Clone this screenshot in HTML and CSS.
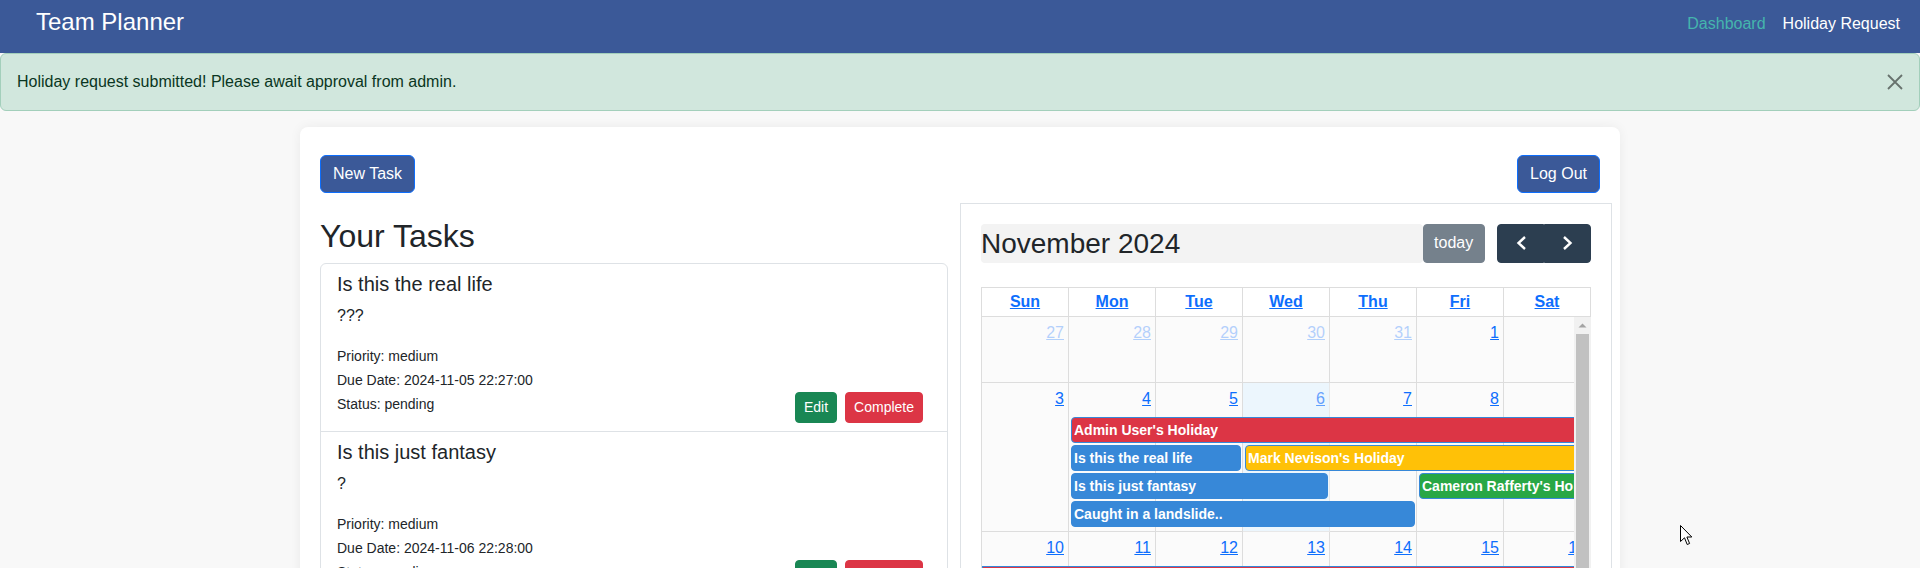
FILE: index.html
```html
<!DOCTYPE html>
<html lang="en">
<head>
<meta charset="utf-8">
<title>Team Planner</title>
<link rel="stylesheet" href="styles.css">
</head>
<body>
<nav class="navbar">
  <a class="brand" href="#">Team Planner</a>
  <div class="nav-links">
    <a class="nav-link active" href="#">Dashboard</a>
    <a class="nav-link" href="#">Holiday Request</a>
  </div>
</nav>

<div class="alert">
  <span>Holiday request submitted! Please await approval from admin.</span>
  <button class="btn-close" aria-label="Close">
    <svg width="16" height="16" viewBox="0 0 16 16"><path d="M1 1 L15 15 M15 1 L1 15" stroke="#000" stroke-width="1.8" fill="none"/></svg>
  </button>
</div>

<main class="container">
  <div class="card">
    <div class="top-actions">
      <button class="btn btn-primary">New Task</button>
      <button class="btn btn-primary">Log Out</button>
    </div>
    <div class="row">
      <section class="col-tasks">
        <h2 class="tasks-title">Your Tasks</h2>
        <ul class="list-group">
          <li class="task">
            <h5 class="task-title">Is this the real life</h5>
            <p class="task-desc">???</p>
            <div class="task-footer">
              <div class="task-meta">
                <div>Priority: medium</div>
                <div>Due Date: 2024-11-05 22:27:00</div>
                <div>Status: pending</div>
              </div>
              <div class="task-actions">
                <button class="btn-sm btn-success">Edit</button>
                <button class="btn-sm btn-danger">Complete</button>
              </div>
            </div>
          </li>
          <li class="task">
            <h5 class="task-title">Is this just fantasy</h5>
            <p class="task-desc">?</p>
            <div class="task-footer">
              <div class="task-meta">
                <div>Priority: medium</div>
                <div>Due Date: 2024-11-06 22:28:00</div>
                <div>Status: pending</div>
              </div>
              <div class="task-actions">
                <button class="btn-sm btn-success">Edit</button>
                <button class="btn-sm btn-danger">Complete</button>
              </div>
            </div>
          </li>
          <li class="task">
            <h5 class="task-title">Caught in a landslide..</h5>
            <p class="task-desc">No escape from reality</p>
            <div class="task-footer">
              <div class="task-meta">
                <div>Priority: medium</div>
                <div>Due Date: 2024-11-07 22:29:00</div>
                <div>Status: pending</div>
              </div>
              <div class="task-actions">
                <button class="btn-sm btn-success">Edit</button>
                <button class="btn-sm btn-danger">Complete</button>
              </div>
            </div>
          </li>
        </ul>
      </section>

      <section class="col-cal">
        <div class="toolbar">
          <h2 class="cal-title">November 2024</h2>
          <button class="fc-btn today">today</button>
          <div class="fc-group">
            <button class="fc-btn" aria-label="prev">
              <svg width="24" height="24" viewBox="0 0 24 24"><path d="M16 6 L9.5 12 L16 18" stroke="#fff" stroke-width="2.4" fill="none"/></svg>
            </button>
            <button class="fc-btn" aria-label="next">
              <svg width="24" height="24" viewBox="0 0 24 24"><path d="M8 6 L14.5 12 L8 18" stroke="#fff" stroke-width="2.4" fill="none"/></svg>
            </button>
          </div>
        </div>

        <div class="cal">
          <div class="cal-head">
            <div class="th"><a href="#">Sun</a></div>
            <div class="th"><a href="#">Mon</a></div>
            <div class="th"><a href="#">Tue</a></div>
            <div class="th"><a href="#">Wed</a></div>
            <div class="th"><a href="#">Thu</a></div>
            <div class="th"><a href="#">Fri</a></div>
            <div class="th"><a href="#">Sat</a></div>
          </div>
          <div class="cal-body">
            <div class="week week-short">
              <div class="day other"><a class="num" href="#">27</a></div>
              <div class="day other"><a class="num" href="#">28</a></div>
              <div class="day other"><a class="num" href="#">29</a></div>
              <div class="day other"><a class="num" href="#">30</a></div>
              <div class="day other"><a class="num" href="#">31</a></div>
              <div class="day"><a class="num" href="#">1</a></div>
              <div class="day"><a class="num" href="#">2</a></div>
            </div>
            <div class="week week-tall">
              <div class="day"><a class="num" href="#">3</a></div>
              <div class="day"><a class="num" href="#">4</a></div>
              <div class="day"><a class="num" href="#">5</a></div>
              <div class="day today"><a class="num" href="#">6</a></div>
              <div class="day"><a class="num" href="#">7</a></div>
              <div class="day"><a class="num" href="#">8</a></div>
              <div class="day"><a class="num" href="#">9</a></div>
              <div class="events">
                <div class="ev ev-red cont-r" style="grid-column: 2 / 8; grid-row: 1;">Admin User's Holiday</div>
                <div class="ev ev-blue" style="grid-column: 2 / 4; grid-row: 2;">Is this the real life</div>
                <div class="ev ev-yellow cont-r" style="grid-column: 4 / 8; grid-row: 2;">Mark Nevison's Holiday</div>
                <div class="ev ev-blue" style="grid-column: 2 / 5; grid-row: 3;">Is this just fantasy</div>
                <div class="ev ev-green cont-r" style="grid-column: 6 / 8; grid-row: 3;">Cameron Rafferty's Holiday</div>
                <div class="ev ev-blue" style="grid-column: 2 / 6; grid-row: 4;">Caught in a landslide..</div>
              </div>
            </div>
            <div class="week week-tall">
              <div class="day"><a class="num" href="#">10</a></div>
              <div class="day"><a class="num" href="#">11</a></div>
              <div class="day"><a class="num" href="#">12</a></div>
              <div class="day"><a class="num" href="#">13</a></div>
              <div class="day"><a class="num" href="#">14</a></div>
              <div class="day"><a class="num" href="#">15</a></div>
              <div class="day"><a class="num" href="#">16</a></div>
              <div class="events">
                <div class="ev ev-red cont-l cont-r" style="grid-column: 1 / 8; grid-row: 1;">Admin User's Holiday</div>
                <div class="ev ev-yellow cont-l" style="grid-column: 1 / 4; grid-row: 2;">Mark Nevison's Holiday</div>
                <div class="ev ev-green cont-l" style="grid-column: 1 / 2; grid-row: 3;">Cameron Rafferty's Holiday</div>
              </div>
            </div>
            <div class="week week-short">
              <div class="day"><a class="num" href="#">17</a></div>
              <div class="day"><a class="num" href="#">18</a></div>
              <div class="day"><a class="num" href="#">19</a></div>
              <div class="day"><a class="num" href="#">20</a></div>
              <div class="day"><a class="num" href="#">21</a></div>
              <div class="day"><a class="num" href="#">22</a></div>
              <div class="day"><a class="num" href="#">23</a></div>
            </div>
            <div class="week week-short">
              <div class="day"><a class="num" href="#">24</a></div>
              <div class="day"><a class="num" href="#">25</a></div>
              <div class="day"><a class="num" href="#">26</a></div>
              <div class="day"><a class="num" href="#">27</a></div>
              <div class="day"><a class="num" href="#">28</a></div>
              <div class="day"><a class="num" href="#">29</a></div>
              <div class="day"><a class="num" href="#">30</a></div>
            </div>
            <div class="scrollbar">
              <div class="sb-up">
                <svg width="17" height="17" viewBox="0 0 17 17"><path d="M4.5 10.5 L8.5 6.5 L12.5 10.5 Z" fill="#a3a3a3"/></svg>
              </div>
              <div class="sb-thumb"></div>
            </div>
          </div>
        </div>
      </section>
    </div>
  </div>
</main>

<svg class="cursor" width="13" height="21" viewBox="0 0 13 21"><path d="M0.5 0.5 L0.5 16.5 L4.5 12.8 L7.2 19.5 L9.6 18.5 L6.9 12 L11.8 12 Z" fill="#fff" stroke="#000" stroke-width="1"/></svg>
</body>
</html>
```
FILE: styles.css
```css
* { box-sizing: border-box; }

body {
  margin: 0;
  background: #f8f8f8;
  color: #212529;
  font-family: "Liberation Sans", Arial, sans-serif;
  font-size: 16px;
  line-height: 1.5;
}

button { font-family: inherit; cursor: pointer; }

/* Navbar */
.navbar {
  display: flex;
  justify-content: space-between;
  align-items: flex-start;
  height: 53px;
  padding: 0 20px 0 36px;
  background: #3b5998;
}
.brand {
  color: #fff;
  font-size: 24px;
  line-height: 29px;
  padding-top: 7px;
  text-decoration: none;
}
.nav-links {
  display: flex;
  gap: 17px;
  margin-top: 12px;
}
.nav-link {
  color: #fff;
  font-size: 16px;
  line-height: 24px;
  text-decoration: none;
}
.nav-link.active { color: #45b5ad; }

/* Alert */
.alert {
  position: relative;
  background: #d1e7dd;
  border: 1px solid #a3cfbb;
  color: #0a3622;
  border-radius: 6px;
  padding: 16px 48px 16px 16px;
  margin-bottom: 16px;
  line-height: 24px;
}
.btn-close {
  position: absolute;
  top: 0;
  right: 0;
  padding: 20px 16px;
  border: 0;
  background: none;
  opacity: .5;
  line-height: 0;
}

/* Main card */
.container {
  width: 1320px;
  margin: 0 auto;
}
.card {
  background: #fff;
  border-radius: 8px;
  box-shadow: 0 0 12px rgba(0, 0, 0, .06);
  padding: 28px 20px 20px;
}
.top-actions {
  display: flex;
  justify-content: space-between;
}
.btn-primary {
  font-size: 16px;
  line-height: 24px;
  padding: 6px 12px;
  border: 1px solid #0d6efd;
  background: #3b5998;
  color: #fff;
  border-radius: 6px;
}

.row {
  display: grid;
  grid-template-columns: 1fr 1fr;
  margin: 10px -12px 0;
}

/* Tasks */
.col-tasks { padding: 0 12px; }
.tasks-title {
  font-size: 32px;
  line-height: 1.2;
  font-weight: 500;
  margin: 14px 0 8px;
}
.list-group {
  list-style: none;
  margin: 0;
  padding: 0;
  border: 1px solid #dee2e6;
  border-radius: 6px;
}
.task { padding: 8px 16px; }
.task + .task { border-top: 1px solid #dee2e6; }
.task-title {
  font-size: 20px;
  line-height: 1.2;
  font-weight: 500;
  margin: 0 0 8px;
}
.task-desc { margin: 0 0 16px; }
.task-footer {
  display: flex;
  justify-content: space-between;
  align-items: flex-end;
}
.task-meta {
  font-size: 14px;
  line-height: 24px;
  margin-bottom: 7px;
}
.task-actions {
  display: flex;
  gap: 8px;
  margin-right: 8px;
}
.btn-sm {
  font-size: 14px;
  line-height: 21px;
  padding: 4px 8px;
  border: 1px solid transparent;
  border-radius: 4px;
  color: #fff;
}
.btn-success { background: #198754; border-color: #198754; }
.btn-danger { background: #dc3545; border-color: #dc3545; }

/* Calendar */
.col-cal {
  border: 1px solid #dee2e6;
  padding: 20px;
}
.toolbar {
  display: flex;
  align-items: stretch;
  margin-bottom: 24px;
}
.cal-title {
  flex: 1;
  display: flex;
  align-items: center;
  margin: 0;
  background: #f3f3f3;
  border-radius: 4px;
  font-size: 28px;
  font-weight: 400;
  line-height: 33.6px;
}
.fc-btn {
  font-size: 16px;
  line-height: 24px;
  padding: 6.4px 10.4px;
  border: 1px solid #2c3e50;
  background: #2c3e50;
  color: #fff;
  border-radius: 4px;
}
.fc-btn svg { display: block; }
.today { opacity: .65; }
.fc-group {
  display: flex;
  margin-left: 12.8px;
}
.fc-group .fc-btn:first-child { border-radius: 4px 0 0 4px; }
.fc-group .fc-btn:last-child { border-radius: 0 4px 4px 0; }

.cal-head {
  display: grid;
  grid-template-columns: repeat(7, 1fr);
  border-top: 1px solid #ddd;
  border-left: 1px solid #ddd;
}
.th {
  border-right: 1px solid #ddd;
  border-bottom: 1px solid #ddd;
  padding: 2px;
  text-align: center;
  font-weight: 700;
  line-height: 24px;
}
.th a { color: #0d6efd; text-decoration: underline; }

.cal-body {
  position: relative;
  overflow: hidden;
  border-left: 1px solid #ddd;
}
.week {
  position: relative;
  display: grid;
  grid-template-columns: repeat(7, 1fr);
}
.week-short { height: 66px; }
.week-tall { height: 149px; }
.day {
  border-right: 1px solid #ddd;
  border-bottom: 1px solid #ddd;
  background: #fbfbfb;
  padding: 4px;
  text-align: right;
  line-height: 24px;
}
.day.today { background: #e3f2fd; }
.num { color: #0d6efd; text-decoration: underline; }
.day.other .num { opacity: .3; }

.events {
  position: absolute;
  top: 34px;
  left: 0;
  right: 0;
  display: grid;
  grid-template-columns: repeat(7, 1fr);
  grid-auto-rows: 26px;
  row-gap: 2px;
}
.ev {
  min-width: 0;
  margin: 0 2px;
  border: 1px solid #3788d8;
  border-radius: 4px;
  color: #fff;
  font-size: 14px;
  font-weight: 700;
  line-height: 24px;
  padding: 0 2px;
  white-space: nowrap;
  overflow: hidden;
}
.ev.cont-r { margin-right: 0; border-top-right-radius: 0; border-bottom-right-radius: 0; }
.ev.cont-l { margin-left: 0; border-top-left-radius: 0; border-bottom-left-radius: 0; }
.ev-red { background: #dc3545; }
.ev-blue { background: #3788d8; }
.ev-yellow { background: #ffc107; }
.ev-green { background: #28a745; }

.scrollbar {
  position: absolute;
  top: 0;
  right: 0;
  bottom: 0;
  width: 17px;
  background: #f1f1f1;
  z-index: 2;
}
.sb-up { height: 17px; }
.sb-up svg { display: block; }
.sb-thumb {
  position: absolute;
  top: 17px;
  left: 2px;
  right: 2px;
  bottom: 0;
  background: #c1c1c1;
}

.cursor {
  position: absolute;
  left: 1680px;
  top: 525px;
  pointer-events: none;
  z-index: 10;
}
```
